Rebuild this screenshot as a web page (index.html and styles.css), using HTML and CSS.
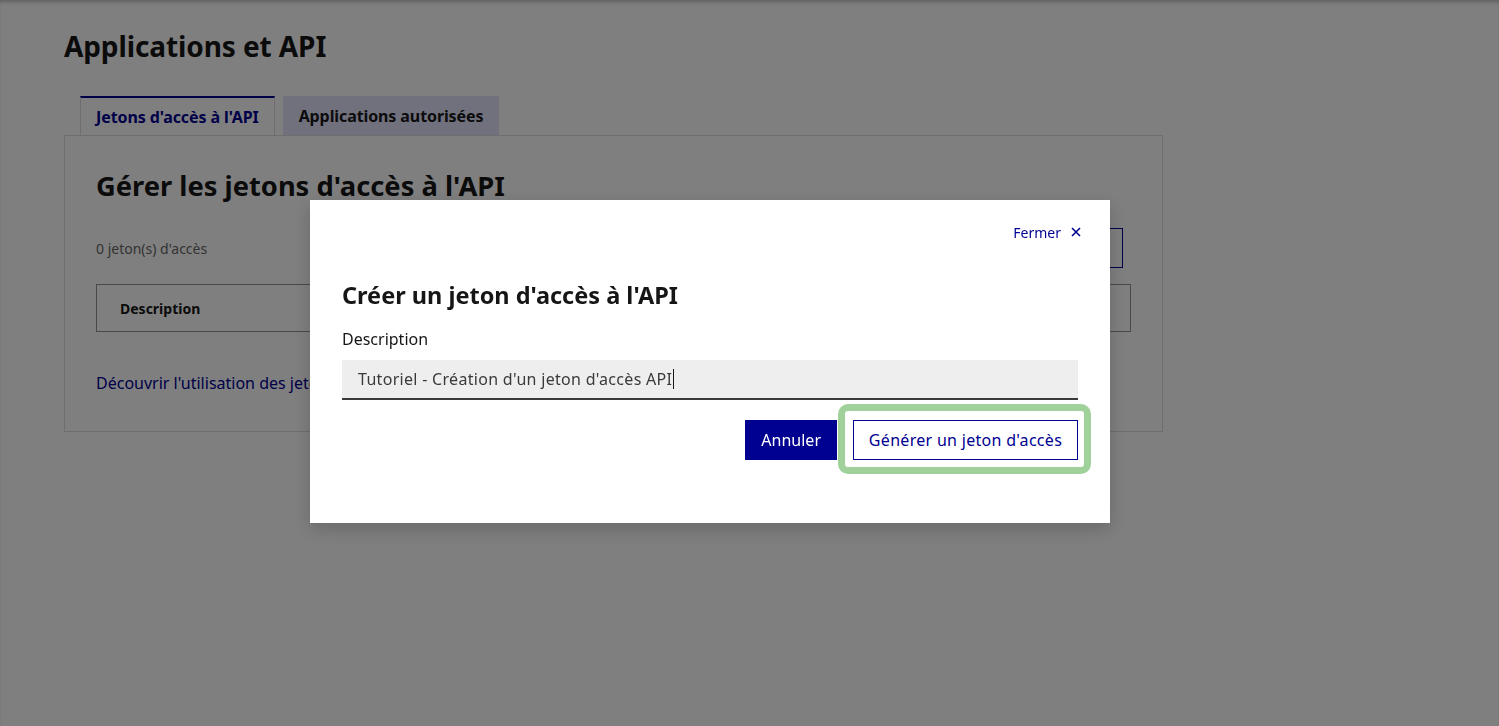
FILE: index.html
```html
<!DOCTYPE html>
<html lang="fr">
<head>
<meta charset="utf-8">
<title>Applications et API</title>
<link rel="stylesheet" href="styles.css">
</head>
<body>
<div class="page">
  <main class="main">
    <h1 class="title">Applications et API</h1>
    <div class="tabs">
      <div class="tab tab-active">Jetons d'accès à l'API</div>
      <div class="tab">Applications autorisées</div>
    </div>
    <section class="panel">
      <h2 class="panel-title">Gérer les jetons d'accès à l'API</h2>
      <div class="panel-row">
        <span class="count">0 jeton(s) d'accès</span>
        <button class="btn-outline">Créer un jeton d'accès</button>
      </div>
      <div class="table-head">
        <span class="th">Description</span>
      </div>
      <a class="link" href="#">Découvrir l'utilisation des jetons d'accès à l'API</a>
    </section>
  </main>
</div>

<div class="overlay">
  <div class="modal" role="dialog">
    <div class="modal-top">
      <button class="close">Fermer
        <svg class="close-icon" width="10" height="10" viewBox="0 0 10 10"><path d="M1 1L9 9M9 1L1 9" stroke="#000091" stroke-width="1.6" fill="none"/></svg>
      </button>
    </div>
    <h2 class="modal-title">Créer un jeton d'accès à l'API</h2>
    <label class="label">Description</label>
    <div class="input" role="textbox">Tutoriel - Création d'un jeton d'accès API<span class="caret"></span></div>
    <div class="actions">
      <button class="btn-primary">Annuler</button>
      <div class="highlight">
        <button class="btn-secondary">Générer un jeton d'accès</button>
      </div>
    </div>
  </div>
</div>
</body>
</html>
```

FILE: styles.css
```css
* { box-sizing: border-box; }
html, body { margin: 0; padding: 0; }
body {
  background: #fff;
  font-family: "Noto Sans", "Open Sans", sans-serif;
  color: #161616;
  width: 1499px;
  height: 726px;
  overflow: hidden;
}
.page {
  height: 726px;
}
.main {
  padding: 28px 0 0 64px;
  width: 1163px;
}
.title {
  margin: 0;
  font-size: 28px;
  line-height: 36px;
  font-weight: 700;
  letter-spacing: -0.1px;
}
.tabs {
  display: flex;
  gap: 8px;
  margin: 32px 0 0 16px;
}
.tab {
  height: 39px;
  padding: 0 16px;
  display: flex;
  align-items: center;
  font-size: 16px;
  font-weight: 700;
  letter-spacing: -0.1px;
  background: #e3e3fd;
  color: #161616;
}
.tab-active {
  background: #fff;
  color: #000091;
  border-top: 2px solid #000091;
  border-left: 1px solid #ddd;
  border-right: 1px solid #ddd;
  padding: 0 15px;
}
.panel {
  border: 1px solid #ddd;
  padding: 32px 31px 0 31px;
  height: 297px;
}
.panel-title {
  margin: 0;
  font-size: 27.3px;
  line-height: 36px;
  font-weight: 700;
}
.panel-row {
  margin-top: 24px;
  display: flex;
  justify-content: space-between;
  align-items: center;
  padding-right: 8px;
}
.count {
  font-size: 14px;
  color: #666;
}
.btn-outline {
  height: 40px;
  padding: 0 16px;
  background: #fff;
  border: 1px solid #000091;
  color: #000091;
  font-family: inherit;
  font-size: 16px;
}
.table-head {
  margin-top: 16px;
  height: 48px;
  border: 1px solid #929292;
  display: flex;
  align-items: center;
  padding-left: 23px;
}
.th {
  font-size: 14px;
  font-weight: 700;
}
.link {
  display: block;
  margin-top: 40px;
  font-size: 16px;
  color: #000091;
  text-decoration: none;
}

.overlay {
  position: fixed;
  inset: 0;
  background: rgba(0, 0, 0, 0.5);
  box-shadow: inset 0 4px 4px -2px rgba(0, 0, 0, 0.25);
  padding: 200px 0 0 310px;
}
.modal {
  width: 800px;
  height: 323px;
  background: #fff;
  box-shadow: 0 6px 18px rgba(0, 0, 0, 0.18);
  padding: 22px 32px 0 32px;
}
.modal-top {
  display: flex;
  justify-content: flex-end;
}
.close {
  background: none;
  border: 0;
  padding: 0;
  margin-right: -3px;
  font-family: inherit;
  font-size: 14px;
  color: #000091;
  display: flex;
  align-items: center;
  gap: 10px;
  height: 20px;
}
.close-icon { display: block; }
.modal-title {
  margin: 39px 0 0 0;
  font-size: 23.5px;
  line-height: 28px;
  font-weight: 700;
}
.label {
  display: block;
  margin-top: 18px;
  font-size: 16px;
  line-height: 24px;
}
.input {
  margin-top: 9px;
  height: 40px;
  background: #eee;
  border-bottom: 2px solid #3a3a3a;
  padding: 0 16px;
  display: flex;
  align-items: center;
  font-size: 16px;
  letter-spacing: 0.3px;
  color: #3a3a3a;
}
.caret {
  display: inline-block;
  width: 1px;
  height: 20px;
  background: #161616;
  margin-left: 1px;
}
.actions {
  margin-top: 20px;
  display: flex;
  justify-content: flex-end;
  gap: 16px;
}
.btn-primary {
  height: 40px;
  padding: 0 16px;
  background: #000091;
  color: #fff;
  border: 0;
  font-family: inherit;
  font-size: 16px;
}
.highlight {
  position: relative;
  display: flex;
}
.highlight::after {
  content: "";
  position: absolute;
  top: -16px;
  bottom: -14px;
  left: -15px;
  right: -13px;
  border: 7px solid #a0d19b;
  border-radius: 10px;
}
.btn-secondary {
  height: 40px;
  padding: 0 10px;
  width: 225px;
  background: #fff;
  color: #000091;
  border: 1px solid #000091;
  font-family: inherit;
  font-size: 16px;
  letter-spacing: 0.3px;
}
```
